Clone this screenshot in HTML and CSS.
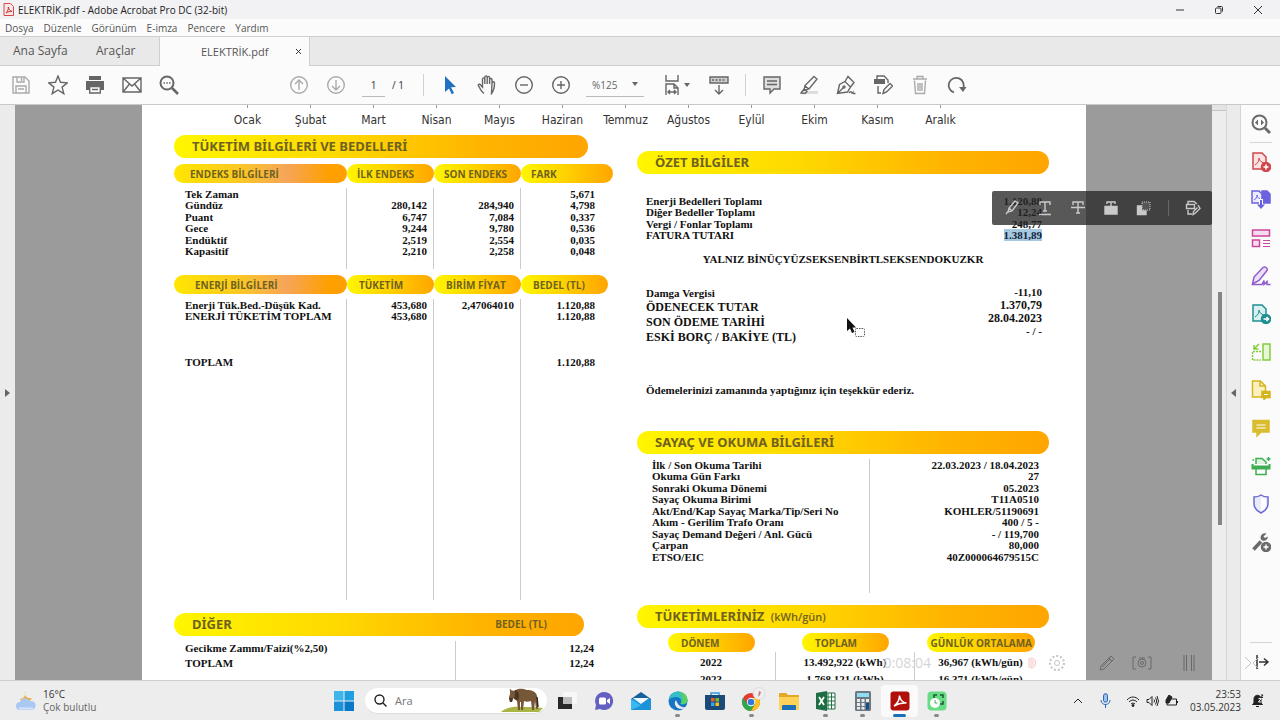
FILE: index.html
```html
<!DOCTYPE html>
<html lang="tr">
<head>
    <meta charset="UTF-8">
    <meta name="viewport" content="width=device-width, initial-scale=1.0">
    <title>ELEKTRİK.pdf - Adobe Acrobat Pro DC (32-bit)</title>
    <link rel="stylesheet" href="styles.css">
</head>
<body>
    <header class="titlebar">
        <svg class="app-icon" width="11" height="13" viewBox="0 0 11 13"><path d="M1 .5h6.500L10.500 3.500v9H1z" fill="#fbe9e9" stroke="#d9484a"/><path d="M3 10c2-2 2.500-4 2.300-6 .4 2 1.700 4 3.700 4.300-2 0-4 .4-6 1.700z" fill="none" stroke="#c92b2e"/></svg>
        <h1>ELEKTRİK.pdf - Adobe Acrobat Pro DC (32-bit)</h1>
        <div class="window-buttons">
            <button aria-label="Küçült"><svg width="10" height="10" viewBox="0 0 10 10"><path d="M1 5h8"/></svg></button>
            <button aria-label="Geri yükle"><svg width="10" height="10" viewBox="0 0 10 10"><rect x="1.500" y="3" width="5.500" height="5.500" rx="1"/><path d="M3.500 1.500h4q1 0 1 1v4"/></svg></button>
            <button aria-label="Kapat"><svg width="10" height="10" viewBox="0 0 10 10"><path d="M1 1l8 8M9 1L1 9"/></svg></button>
        </div>
    </header>

    <nav class="menubar">
        <a href="#">Dosya</a>
        <a href="#">Düzenle</a>
        <a href="#">Görünüm</a>
        <a href="#">E-imza</a>
        <a href="#">Pencere</a>
        <a href="#">Yardım</a>
    </nav>

    <nav class="tabs">
        <a class="tab-home" href="#">Ana Sayfa</a>
        <a class="tab-tools" href="#">Araçlar</a>
        <div class="tab-active">
            <a href="#">ELEKTRİK.pdf</a>
            <button aria-label="Sekmeyi kapat"><svg width="7" height="7" viewBox="0 0 7 7"><path d="M1 1l5 5M6 1L1 6"/></svg></button>
        </div>
    </nav>

    <div class="toolbar">
        <div class="tools">
            <button class="dim" aria-label="Kaydet"><svg viewBox="0 0 20 20"><path d="M2 2h12l4 4v12H2zM6 2v5h7V2M5 18v-7h10v7M10.500 3v3M7 14h6"/></svg></button>
            <button aria-label="Yıldız"><svg viewBox="0 0 20 20"><path d="M10 1l2.500 6.300 6.800.5-5.200 4.300 1.700 6.600L10 15l-5.800 3.700 1.700-6.600L.7 7.800l6.800-.5z"/></svg></button>
            <button aria-label="Yazdır"><svg viewBox="0 0 20 20"><path class="fill" d="M4 1h12v4H4zM1 6h18v9h-3v-4H4v4H1z"/><path d="M4.700 11.500h10.600v6.500H4.700zM7 14.500h6"/></svg></button>
            <button aria-label="E-posta"><svg viewBox="0 0 20 20"><path d="M1 3h18v14H1zM1 3l9 8 9-8M1 17l6.500-8M19 17l-6.500-8"/></svg></button>
            <button aria-label="Bul"><svg viewBox="0 0 20 20"><circle cx="8" cy="8" r="6.500" stroke-width="2"/><path d="M13 13l6 6" stroke-width="2.500"/><path d="M4.500 8h1.500M7.300 8h1.500M10 8h1.500"/></svg></button>
        </div>
        <div class="tools tools-pages">
            <button class="dim" aria-label="Önceki sayfa"><svg viewBox="0 0 20 20"><circle cx="10" cy="10" r="8.300"/><path d="M10 15V5M6 9l4-4 4 4"/></svg></button>
            <button class="dim" aria-label="Sonraki sayfa"><svg viewBox="0 0 20 20"><circle cx="10" cy="10" r="8.300"/><path d="M10 5v10M6 11l4 4 4-4"/></svg></button>
            <input class="page-number" type="text" value="1" aria-label="Sayfa numarası">
            <span class="page-count">/ 1</span>
        </div>
        <div class="tools tools-view">
            <button aria-label="Seç"><svg viewBox="0 0 20 20"><path d="M5 1l11 11-5 .3 3 5.700-2.300 1.200-2.700-5.700L5 17z" fill="#2072c0" stroke="none"/></svg></button>
            <button aria-label="Kaydır"><svg viewBox="0 0 20 20"><path d="M7 18.500C4 16 2.500 13 1.200 10.200c.5-1.500 2-1 2.800.3l1.500 1.700V4c.2-1.500 2-1.500 2.300 0v5M7.800 9V2c.3-1.500 2.200-1.500 2.400 0v7M10.200 9V2.500c.3-1.500 2.200-1.500 2.400 0V9M12.600 9V4.500c.5-1.500 2.300-1.200 2.400.3V10M15 8c.4-1.800 2.500-1.600 2.500.2 0 4-.3 7-3 10.300z"/></svg></button>
            <button aria-label="Uzaklaştır"><svg viewBox="0 0 20 20"><circle cx="10" cy="10" r="8.300"/><path d="M6 10h8"/></svg></button>
            <button aria-label="Yakınlaştır"><svg viewBox="0 0 20 20"><circle cx="10" cy="10" r="8.300"/><path d="M6 10h8M10 6v8"/></svg></button>
            <div class="zoom">
                <select aria-label="Yakınlaştırma"><option>%125</option></select>
                <svg width="6" height="5" viewBox="0 0 6 5"><path class="fill" d="M0 0h6L3 4z"/></svg>
            </div>
            <button aria-label="Genişliğe sığdır"><svg viewBox="0 0 20 20"><path d="M4 0v6h12V0M4 20V9h8l4 4v7M12 9v4h4M6 17h8M8 15l-2 2 2 2M12 15l2 2-2 2"/></svg></button>
            <svg class="caret" width="6" height="5" viewBox="0 0 6 5"><path class="fill" d="M0 0h6L3 4z"/></svg>
            <button class="keyboard" aria-label="Klavye"><svg viewBox="0 0 20 20"><path d="M1 2h18v6H1z" fill="#ccc"/><path d="M3 5h14" stroke-dasharray="2 1.500"/><path d="M10 10v9M6 15l4 4 4-4"/></svg></button>
        </div>
        <div class="tools tools-comment">
            <button aria-label="Not ekle"><svg viewBox="0 0 20 20"><path d="M2 2h16v12h-6l-4 4v-4H2z" fill="#ddd"/><path d="M5 6h10M5 9.500h10"/></svg></button>
            <button aria-label="Vurgula"><svg viewBox="0 0 20 20"><path d="M7 16h12v3H3z" fill="#ddd" stroke="none"/><path d="M15 1.500l3 2.500-8 10-5 1.500 1-5zM6 11l4 3M2 18l3-4 3 2.500-2 2z"/></svg></button>
            <button aria-label="İmzala"><svg viewBox="0 0 20 20"><path d="M1.500 18.500l2-9 5.500-3 5.500 5.500-3 5zM1.500 18.500l6-6M9 6.500l3-5 6 6-3.500 4.500M13 18c3-4 2 2 4-.5 0 1.500 1 1 2.500 1"/><circle cx="8" cy="12" r="1"/></svg></button>
            <button aria-label="Düzenle"><svg viewBox="0 0 20 20"><path class="fill" d="M1 4h11v5H1z"/><path d="M4 5V1h7l4 4v3M5 11v7h3M10 18.500l1-4 6-6 2.500 2.500-6 6z" /></svg></button>
            <button class="dim" aria-label="Sil"><svg viewBox="0 0 20 20"><path d="M3 4h14M7 4V1.500h6V4M4.500 5.500l1 13h9l1-13M8 8v8M10 8v8M12 8v8" /></svg></button>
            <button aria-label="Döndür"><svg viewBox="0 0 20 20"><path d="M7 17.500a7.500 7.500 0 1 1 9-4" stroke-width="1.800"/><path class="fill" d="M12 12h7.500l-3.500 5z"/></svg></button>
        </div>
    </div>

    <main class="workspace">
        <button class="pane-toggle" aria-label="Sol bölme"><svg width="5" height="8" viewBox="0 0 5 8"><path d="M0 0v8l5-4z"/></svg></button>

        <div class="viewer">
            <article class="page">
                <ul class="months">
                    <li>Ocak</li><li>Şubat</li><li>Mart</li><li>Nisan</li><li>Mayıs</li><li>Haziran</li>
                    <li>Temmuz</li><li>Ağustos</li><li>Eylül</li><li>Ekim</li><li>Kasım</li><li>Aralık</li>
                </ul>
                <div class="columns">
                    <section class="left">
                        <h2 class="bar">TÜKETİM BİLGİLERİ VE BEDELLERİ</h2>
                        <table class="usage">
                            <thead>
                                <tr><th><span class="pill pill-warm">ENDEKS BİLGİLERİ</span></th><th><span class="pill">İLK ENDEKS</span></th><th><span class="pill">SON ENDEKS</span></th><th><span class="pill">FARK</span></th></tr>
                            </thead>
                            <tbody>
                                <tr><td>Tek Zaman</td><td></td><td></td><td>5,671</td></tr>
                                <tr><td>Gündüz</td><td>280,142</td><td>284,940</td><td>4,798</td></tr>
                                <tr><td>Puant</td><td>6,747</td><td>7,084</td><td>0,337</td></tr>
                                <tr><td>Gece</td><td>9,244</td><td>9,780</td><td>0,536</td></tr>
                                <tr><td>Endüktif</td><td>2,519</td><td>2,554</td><td>0,035</td></tr>
                                <tr><td>Kapasitif</td><td>2,210</td><td>2,258</td><td>0,048</td></tr>
                                <tr class="tail"><td></td><td></td><td></td><td></td></tr>
                            </tbody>
                        </table>
                        <table class="usage energy">
                            <thead>
                                <tr><th><span class="pill pill-warm">ENERJİ BİLGİLERİ</span></th><th><span class="pill">TÜKETİM</span></th><th><span class="pill">BİRİM FİYAT</span></th><th><span class="pill">BEDEL (TL)</span></th></tr>
                            </thead>
                            <tbody>
                                <tr><td>Enerji Tük.Bed.-Düşük Kad.</td><td>453,680</td><td>2,47064010</td><td>1.120,88</td></tr>
                                <tr><td>ENERJİ TÜKETİM TOPLAM</td><td>453,680</td><td></td><td>1.120,88</td></tr>
                                <tr class="space"><td></td><td></td><td></td><td></td></tr>
                                <tr><td>TOPLAM</td><td></td><td></td><td>1.120,88</td></tr>
                                <tr class="tail"><td></td><td></td><td></td><td></td></tr>
                            </tbody>
                        </table>
                        <h2 class="bar bar-other">DİĞER <small>BEDEL (TL)</small></h2>
                        <table class="other">
                            <tr><td>Gecikme Zammı/Faizi(%2,50)</td><td>12,24</td></tr>
                            <tr><td>TOPLAM</td><td>12,24</td></tr>
                            <tr><td></td><td></td></tr>
                        </table>
                    </section>

                    <section class="right">
                        <h2 class="bar">ÖZET BİLGİLER</h2>
                        <table class="summary">
                            <tr><td>Enerji Bedelleri Toplamı</td><td>1.120,88</td></tr>
                            <tr><td>Diğer Bedeller Toplamı</td><td>12,24</td></tr>
                            <tr><td>Vergi / Fonlar Toplamı</td><td>248,77</td></tr>
                            <tr><td>FATURA TUTARI</td><td><mark>1.381,89</mark></td></tr>
                        </table>
                        <p class="in-words">YALNIZ BİNÜÇYÜZSEKSENBİRTLSEKSENDOKUZKR</p>
                        <div class="payment">
                            <div class="payment-labels">
                                <p>Damga Vergisi</p>
                                <p class="big">ÖDENECEK TUTAR</p>
                                <p class="big">SON ÖDEME TARİHİ</p>
                                <p class="big">ESKİ BORÇ / BAKİYE (TL)</p>
                            </div>
                            <div class="payment-values">
                                <p>-11,10</p>
                                <p class="strong">1.370,79</p>
                                <p class="strong">28.04.2023</p>
                                <p>- / -</p>
                            </div>
                        </div>
                        <p class="thanks">Ödemelerinizi zamanında yaptığınız için teşekkür ederiz.</p>

                        <h2 class="bar">SAYAÇ VE OKUMA BİLGİLERİ</h2>
                        <table class="meter">
                            <tr><td>İlk / Son Okuma Tarihi</td><td>22.03.2023 / 18.04.2023</td></tr>
                            <tr><td>Okuma Gün Farkı</td><td>27</td></tr>
                            <tr><td>Sonraki Okuma Dönemi</td><td>05.2023</td></tr>
                            <tr><td>Sayaç Okuma Birimi</td><td>T11A0510</td></tr>
                            <tr><td>Akt/End/Kap Sayaç Marka/Tip/Seri No</td><td>KOHLER/51190691</td></tr>
                            <tr><td>Akım - Gerilim Trafo Oranı</td><td>400 / 5 -</td></tr>
                            <tr><td>Sayaç Demand Değeri / Anl. Gücü</td><td>- / 119,700</td></tr>
                            <tr><td>Çarpan</td><td>80,000</td></tr>
                            <tr><td>ETSO/EIC</td><td>40Z000064679515C</td></tr>
                            <tr class="tail"><td></td><td></td></tr>
                        </table>

                        <h2 class="bar">TÜKETİMLERİNİZ <small class="unit">(kWh/gün)</small></h2>
                        <table class="history">
                            <thead>
                                <tr><th><span class="pill">DÖNEM</span></th><th><span class="pill">TOPLAM</span></th><th><span class="pill pill-wide">GÜNLÜK ORTALAMA</span></th></tr>
                            </thead>
                            <tbody>
                                <tr><td>2022</td><td>13.492,922 (kWh)</td><td>36,967 (kWh/gün)</td></tr>
                                <tr><td>2023</td><td>1.768,121 (kWh)</td><td>16,371 (kWh/gün)</td></tr>
                            </tbody>
                        </table>
                    </section>
                </div>

                <!-- Fare imleci -->
                <svg class="cursor" width="22" height="24" viewBox="0 0 22 24"><path d="M1 1v13l3-2.500 2 4.500 2.500-1-2-4.500H10z" fill="#111"/><rect x="9.500" y="11.500" width="9" height="8" rx="1" fill="none" stroke="#555" stroke-dasharray="1.500 1"/></svg>
            </article>

            <!-- Metin seçimi araç çubuğu -->
            <div class="selection-tools">
                <button aria-label="Metni vurgula"><svg viewBox="0 0 16 16"><path d="M11 1l3 2-6 8-4 1 1-4zM5 8l3 3M2 14l2-2.500"/></svg></button>
                <button aria-label="Altını çiz"><svg viewBox="0 0 16 16"><path d="M3 5V2h10v3M8 2v9M6 11h4M2 14.500h12"/></svg></button>
                <button aria-label="Üstünü çiz"><svg viewBox="0 0 16 16"><path d="M3 5V2h10v3M8 2v11M6 13h4M1 7.500h14"/></svg></button>
                <button aria-label="Metni değiştir"><svg viewBox="0 0 16 16"><path d="M2 6.500h12v7.500H2z" fill="#c9c9c9"/><path d="M4 4V2h8v2M8 2v4"/></svg></button>
                <button aria-label="Kopyala"><svg viewBox="0 0 16 16"><path d="M1.500 6h4v5H10v3.500H1.500z" fill="#c9c9c9"/><path d="M6 2h8v8H6z" stroke-dasharray="1 1" stroke-width="1" fill="#555"/></svg></button>
                <button class="edit" aria-label="Metni düzenle"><svg viewBox="0 0 16 16"><path d="M3 4V1.500h6L12 4M1.500 4.500h8v4h-8zM3 10v4h4M13 5l2 3.500-5 5-2 1 .5-3 4-4"/></svg></button>
            </div>
        </div>

        <div class="scrollbar"><div class="scroll-corner"></div><div class="thumb"></div></div>
        <button class="pane-toggle pane-right" aria-label="Sağ bölme"><svg width="5" height="8" viewBox="0 0 5 8"><path d="M5 0v8L0 4z"/></svg></button>

        <aside class="tool-pane">
            <button class="first" aria-label="Araç ara"><svg viewBox="0 0 20 20" stroke="#6b6b6b"><circle cx="8.500" cy="8.500" r="7" stroke-width="2"/><path d="M14 14l5 5" stroke-width="3"/><path d="M7 5.500v6L4 8.500zM10 5.500v6l3-3z" fill="#6b6b6b" stroke="none"/></svg></button>
            <button aria-label="PDF Oluştur"><svg viewBox="0 0 20 20" stroke="#d0474c"><path d="M2 1h9l4 4v12H2z" fill="#fbe3e3"/><path d="M4 13c3-2 4-4 4-7 .5 3 2 4 5 5" stroke-width="1"/><circle cx="15" cy="15" r="4.500" fill="#d0474c"/><path d="M12.500 15h5M15 12.500v5" stroke="#fff"/></svg></button>
            <button aria-label="Dosyaları Birleştir"><svg viewBox="0 0 20 20" stroke="#6a63dd"><path d="M11 1h5l3 3v9h-8z" fill="#6a63dd"/><path d="M1 1h7l3 3v9H1z" fill="#eceafd"/><path d="M3 10c2-1 3-3 3-5 .5 2 1 3 3 4" stroke-width="1"/><path d="M10 9v9" stroke="#fff" stroke-width="4"/><path d="M10 10v6" stroke-width="2"/><path d="M6 14.500h8L10 19z" fill="#6a63dd" stroke="none"/></svg></button>
            <button aria-label="Sayfaları Düzenle"><svg viewBox="0 0 20 20" stroke="#c9489b"><path d="M1.500 2h17v6h-17zM1.500 12h7v6.500h-7z" fill="#f8dcee"/><path d="M12 12.500h7M12 15.500h7M12 18.500h7" stroke-width="1"/></svg></button>
            <button aria-label="Doldur ve İmzala"><svg viewBox="0 0 20 20" stroke="#8f5ccb"><path d="M1.500 18l1.500-7L12 1.500c2-1.500 5 .5 4 3L8 14.500z" fill="#ecdff8"/><path d="M1 18.500h10l2-4v4l3-3v3h3.500"/></svg></button>
            <button aria-label="PDF Dışa Aktar"><svg viewBox="0 0 20 20" stroke="#1f8f92"><path d="M2 1h9l4 4v12H2z" fill="#d9f0f0"/><path d="M4 13c3-2 4-4 4-7 .5 3 2 4 5 5" stroke-width="1"/><circle cx="15" cy="15" r="4.500" fill="#1f8f92"/><path d="M12.500 15h5M15.500 13l2 2-2 2" stroke="#fff"/></svg></button>
            <button aria-label="Sayfa Düzeni"><svg viewBox="0 0 20 20" stroke="#85cc3f"><path d="M12 2h7v16h-7z" fill="#e6f7d4"/><path d="M10 9.500H1.500V18H10" stroke-dasharray="2 1"/><path d="M8 2L3 7M3 3v4h4.500"/></svg></button>
            <button aria-label="Yorum Gönder"><svg viewBox="0 0 20 20" stroke="#d4b51c"><path d="M1.500 1h8l5 5v11h-13z" fill="#faf0c0"/><path d="M9 1v5h5"/><path d="M11 11.500h8v6h-4l-2 2v-2h-2z" fill="#d4b51c"/><path d="M13 14.500h4" stroke="#fff" stroke-width="1"/></svg></button>
            <button aria-label="Yorum"><svg viewBox="0 0 20 20" stroke="#d9bd2e"><path d="M2 2.500h16v11.500h-8l-4 4v-4H2z" fill="#d9bd2e"/><path d="M5.500 7h9M5.500 10h9" stroke="#fff" stroke-width="1"/></svg></button>
            <button aria-label="Tara ve OCR"><svg viewBox="0 0 20 20" stroke="#3fae52"><path d="M5 8V2.500h6L15 6v2" fill="#dff5e2"/><path d="M1.500 8v4.500h17V8M1 10.500h18" stroke-width="2"/><path d="M5 13v5.500h10V13M17.500 1v4M15.500 3h4M1.500 4h1.500"/></svg></button>
            <button aria-label="Koru"><svg viewBox="0 0 20 20" stroke="#6a6bd0"><path d="M10 1c2 1.500 4 2 7 2v7c0 4-3 7-7 9-4-2-7-5-7-9V3c3 0 5-.5 7-2z" fill="#e9ebfb"/><path d="M10 3v14c3-1.500 5-4 5-7V5c-2 0-4-1-5-2z" fill="#fff" stroke="none"/></svg></button>
            <button aria-label="Diğer Araçlar"><svg viewBox="0 0 20 20" stroke="#6b6b6b"><path d="M2.500 17.500L10 9.500" stroke-width="3.500"/><path d="M15.500 1.500c-4-1.500-7 2.500-5.500 6 2 2.500 6.500 1.500 7-3l-3 1.500-1.500-1.500z" fill="#6b6b6b" stroke="none"/><circle cx="15" cy="15" r="4.500" fill="#6b6b6b"/><path d="M12.500 15h5M15 12.500v5" stroke="#fff"/></svg></button>
            <button class="collapse" aria-label="Bölmeyi daralt"><svg viewBox="0 0 20 20" stroke="#333"><path d="M6 3v14M8 10h9M13 6.500l4 3.500-4 3.500"/></svg></button>
        </aside>

        <!-- Ekran kaydedici kontrolleri -->
        <div class="recorder">
            <span class="recorder-time">0:08:04</span>
            <svg class="recorder-record" width="10" height="14" viewBox="0 0 10 14"><path d="M2 2v10M4 2c6 0 6 10 0 10zM6 4v6"/></svg>
            <svg class="recorder-gear" width="18" height="18" viewBox="0 0 18 18"><circle cx="9" cy="9" r="7" stroke-width="2" stroke-dasharray="2 2"/><circle cx="9" cy="9" r="2.500"/></svg>
            <svg class="recorder-dark" width="18" height="18" viewBox="0 0 18 18"><path d="M2 16l1-4L13 2l3 3L6 15zM11 4l3 3M4 13L12 5"/></svg>
            <svg class="recorder-dark" width="20" height="18" viewBox="0 0 20 18"><path d="M4 3H1v12h3M16 3h3v12h-3M7 4h6"/><circle cx="10" cy="9" r="4"/><circle cx="10" cy="9" r="1.500"/></svg>
            <svg class="recorder-dark recorder-pause" width="14" height="18" viewBox="0 0 14 18"><path d="M2 1v16M4.500 1v16M9.500 1v16M12 1v16"/></svg>
            <svg class="recorder-close" width="16" height="16" viewBox="0 0 16 16"><path d="M1 2l6 6-6 6M15 2L9 8l6 6"/></svg>
        </div>
    </main>

    <footer class="taskbar">
        <a class="weather" href="#">
            <svg width="22" height="22" viewBox="0 0 22 22"><path d="M10 1c-1 5 2 8 7 7-2 5-10 6-12 1 4 0 6-4 5-8z" fill="#f2a93b"/><path d="M5 20a4 4 0 0 1 0-8 5.500 5.500 0 0 1 10-1 4.600 4.600 0 0 1 2 9z" fill="#a9c8f2"/><path d="M4 18.500h14" stroke="#d5e4fa" stroke-width="2"/></svg>
            <span>16°C<br><span class="soft">Çok bulutlu</span></span>
        </a>
        <div class="apps">
            <button class="start" aria-label="Başlat"><svg width="20" height="20" viewBox="0 0 20 20"><path d="M0 0h9.500v9.500H0z" fill="#3bb5ea"/><path d="M10.500 0H20v9.500h-9.500z" fill="#1f9fe0"/><path d="M0 10.500h9.500V20H0z" fill="#1b93d8"/><path d="M10.500 10.500H20V20h-9.500z" fill="#0878c8"/></svg></button>
            <label class="search">
                <svg width="13" height="13" viewBox="0 0 13 13"><circle cx="5.500" cy="5.500" r="4.500"/><path d="M9 9l3.500 3.500"/></svg>
                <input type="text" placeholder="Ara" aria-label="Ara">
                <svg class="gnu" width="42" height="24" viewBox="0 0 42 24"><path d="M0 24c5-5 14-6 22-5 8 0 14 0 20 1l-4 4z" fill="#a9b545"/><path d="M9 3c-1-2 1-3 1-1 1 1 3 1 5 0 4-2 7-1 11 0 4 0 9 1 10 6l1 13h-2l-1-8-1 9h-2l-1-9c-3 1-5 1-7 0l-1 9h-2v-8h-1v8h-2l-1-9-4-3-1 4-2 0-1-5 1-3z" fill="#765738"/><path d="M14 2c4 1 5 6 3 10l-4-1c1-3 1-6 1-9zM8 10l1 4h2l1-4z" fill="#4a3626"/><path d="M36 9l1 10" stroke="#2c211a"/></svg>
            </label>
            <button aria-label="Görev görünümü"><svg viewBox="0 0 20 20"><path d="M1 6h14v12H1z" fill="#282828"/><path d="M6 1h14v12H6z" fill="#f7f7f7"/><path d="M6 6h9v7H6z" fill="#bdbdbd"/></svg></button>
            <button aria-label="Sohbet"><svg viewBox="0 0 20 20"><path d="M10 1a9 9 0 1 1-4 17l-5 1 1-5A9 9 0 0 1 10 1z" fill="#6460c2"/><rect x="5" y="6.500" width="7" height="7" rx="1.500" fill="#fff"/><path d="M13 9l3-2v6l-3-2z" fill="#fff"/></svg></button>
            <button aria-label="Posta"><svg viewBox="0 0 20 20"><path d="M0 8l10-7 10 7z" fill="#14619e"/><path d="M0 8h20v11H0z" fill="#1c93d9"/><path d="M2 7h16l-8 6z" fill="#f3faff"/><path d="M0 8l10 6.500L0 19z" fill="#3ab8f0"/></svg></button>
            <button class="running" aria-label="Edge"><svg viewBox="0 0 20 20"><circle cx="10" cy="10" r="9.500" fill="#1676c5"/><path d="M.6 9A9.500 9.500 0 0 1 19.500 9c.3 3-3 5-7 4 2-3 0-7-4-7-4 0-6 1-7.900 3z" fill="#35bfc5"/><path d="M12 .8c5 1 8 5 7.500 9-1 3-4 4-7 3 3-3 2-8-.5-12z" fill="#5bd060"/><path d="M8 9c-3 4 0 9 6 9 2 0 3-1 4-2-4 1-8-1-10-7z" fill="#ececec"/></svg></button>
            <button aria-label="Microsoft Store"><svg viewBox="0 0 20 20"><path d="M6 5V2h8v3" fill="none" stroke="#2e9be0" stroke-width="1.500"/><path d="M0 4h20v13q0 2-2 2H2q-2 0-2-2z" fill="#1b4a78"/><path d="M6 7h3.500v3.500H6z" fill="#ee5b35"/><path d="M10.500 7H14v3.500h-3.500z" fill="#7fba2c"/><path d="M6 11.500h3.500V15H6z" fill="#32a6ea"/><path d="M10.500 11.500H14V15h-3.500z" fill="#fbbc1e"/></svg></button>
            <button class="running" aria-label="Chrome"><svg viewBox="0 0 20 20" overflow="visible"><circle cx="9" cy="11" r="9" fill="#e33b2e"/><path d="M1.200 6.500A9 9 0 0 0 9 20l4-7-8 0z" fill="#2da94f"/><path d="M9 20a9 9 0 0 0 8-13H9l4 6z" fill="#fcc31e"/><circle cx="9" cy="11" r="4.200" fill="#fff"/><circle cx="9" cy="11" r="3.300" fill="#2f78e0"/><circle cx="17" cy="2.500" r="6" fill="#f0eeee" stroke="#ccc" stroke-width=".5"/><path d="M16 6l1-6 2 1-1 3z" fill="#b98080"/></svg></button>
            <button aria-label="Dosya Gezgini"><svg viewBox="0 0 20 20"><path d="M0 2h7l2 2h11v14H0z" fill="#e5a823"/><path d="M0 6h20v13H0z" fill="#ffd25a"/><path d="M3 19v-4q0-1 1-1h12q1 0 1 1v4z" fill="#1d6fb8"/></svg></button>
            <button class="running" aria-label="Excel"><svg viewBox="0 0 20 20"><path d="M6 2h13v16H6z" fill="#fff" stroke="#217346"/><path d="M12 2v16M15.500 2v16M10 6h9M10 10h9M10 14h9" stroke="#217346"/><path d="M0 2l11-2v20L0 18z" fill="#1d6e42"/><path d="M3 6l5 8M8 6l-5 8" stroke="#fff" stroke-width="1.800"/></svg></button>
            <button class="running" aria-label="Hesap Makinesi"><svg viewBox="0 0 20 20"><rect x="2" width="16" height="20" rx="1.500" fill="#6f7881"/><path d="M4 2h12v4H4z" fill="#8fdcf5"/><path d="M4 8h3v3H4zM8.500 8h3v3h-3zM13 8h3v3h-3zM4 12h3v3H4zM8.500 12h3v3h-3zM4 16h3v2.500H4zM8.500 16h3v2.500h-3z" fill="#e8ecef"/><path d="M13 12h3v6.500h-3z" fill="#14508a"/></svg></button>
            <button class="running current" aria-label="Acrobat"><svg viewBox="0 0 20 20"><rect x=".5" y=".5" width="19" height="19" rx="3" fill="#b1100a"/><path d="M4 15c4-3 5.500-6 5.500-10.500C10 9 12 11.500 16.500 12c-4.500-.5-8.500.5-12.500 3z" fill="none" stroke="#fff" stroke-width="1.500"/></svg></button>
            <button class="running" aria-label="Saat"><svg viewBox="0 0 20 20"><rect x=".5" y=".5" width="19" height="19" rx="4" fill="#66dc84"/><path d="M7 7V4h3M13 4h3v3M16 10v3h-3" fill="none" stroke="#1d5a32" stroke-width="1.500"/><circle cx="8" cy="12" r="5" fill="#fff"/><path d="M8 9v3h2.500" fill="none" stroke="#4aa868"/></svg></button>
        </div>
        <div class="tray">
            <button aria-label="Gizli simgeler"><svg width="10" height="6" viewBox="0 0 10 6"><path d="M1 5l4-4 4 4"/></svg></button>
            <button class="mic" aria-label="Mikrofon"><svg width="11" height="15" viewBox="0 0 11 15"><rect x="3.500" y=".7" width="4" height="8.500" rx="2" fill="#9cc3ee" stroke="#2b67b5"/><path d="M1 7c0 6 9 6 9 0M5.500 11.500V15" stroke="#2b67b5"/></svg></button>
            <button class="net" aria-label="Ağ ve ses">
                <svg width="14" height="12" viewBox="0 0 14 12"><path d="M1 5c3.500-4 8.500-4 12 0M3 7c2.500-2.600 5.500-2.600 8 0M5 9c1.300-1.200 2.700-1.200 4 0"/><circle cx="7" cy="10.500" r="1" fill="#222"/></svg>
                <svg width="13" height="12" viewBox="0 0 13 12"><path d="M1 4.500v3h2l3 3v-9l-3 3zM8 4.500q1 1.500 0 3M9.500 2.500q2.500 3.500 0 7M11 1q3 5 0 10"/></svg>
                <svg width="14" height="12" viewBox="0 0 14 12"><path d="M3 4h8.500v6H2V7M12.500 6v2"/><path d="M1 5l3-5 3 2-3 6H1z" fill="#222"/></svg>
            </button>
            <div class="clock">23:53<br>03.05.2023</div>
            <button aria-label="Bildirimler"><svg width="13" height="14" viewBox="0 0 13 14"><path d="M3 9V5c0-5 7-5 7 0v4l1.500 1.500h-10zM5 12.500h3" fill="#222"/><path d="M7.500 4.500H10L7.500 8H10" stroke="#fff"/><path d="M10 1h2l-2 2.500h2"/></svg></button>
        </div>
    </footer>
</body>
</html>
```
FILE: styles.css
```css
* {
    margin: 0;
    padding: 0;
    box-sizing: border-box;
}

body {
    display: flex;
    flex-direction: column;
    height: 100vh;
    overflow: hidden;
    font-family: "Open Sans", "Noto Sans", sans-serif;
    font-size: 10px;
    color: #333;
    background-color: #fbfbfb;
}

button, input, select {
    border: none;
    background: none;
    font: inherit;
    color: inherit;
}

button {
    display: flex;
    align-items: center;
    justify-content: center;
}

a {
    color: inherit;
    text-decoration: none;
}

svg {
    flex: none;
}

/* Başlık çubuğu */
.titlebar {
    display: flex;
    align-items: center;
    height: 19px;
    padding: 0 3px;
    gap: 4px;
    background-color: #f2f2f4;
}

.titlebar h1 {
    flex: 1;
    font-size: 10px;
    font-weight: normal;
    color: #222;
}

.window-buttons {
    display: flex;
}

.window-buttons button {
    width: 39px;
    height: 19px;
}

.window-buttons svg,
.tab-active svg {
    fill: none;
    stroke: #333;
}

.menubar {
    display: flex;
    align-items: center;
    gap: 10px;
    height: 17px;
    padding-left: 5px;
    color: #555;
}

/* Sekmeler */
.tabs {
    display: flex;
    height: 30px;
    font-size: 12px;
    line-height: 28px;
    color: #555;
    background-color: #e9e9e9;
    border-top: 1px solid #cfcfcf;
    border-bottom: 1px solid #cfcfcf;
}

.tab-home {
    width: 84px;
    padding-left: 13px;
}

.tab-tools {
    width: 75px;
    padding-left: 12px;
}

.tab-active {
    display: flex;
    align-items: center;
    justify-content: space-between;
    width: 151px;
    height: 29px;
    padding: 0 7px 0 41px;
    font-size: 11px;
    background-color: #fbfbfb;
    border-left: 1px solid #cfcfcf;
    border-right: 1px solid #cfcfcf;
}

/* Araç çubuğu */
.toolbar {
    display: flex;
    height: 39px;
    padding-left: 2px;
    border-bottom: 1px solid #c9c9c9;
}

.tools {
    display: flex;
    align-items: center;
    fill: none;
    stroke: #666;
    stroke-width: 1.4;
}

.tools button {
    width: 37px;
    height: 38px;
}

.tools button svg {
    width: 20px;
    height: 20px;
}

.tools .dim {
    stroke: #aaa;
}

.tools .fill {
    fill: #666;
    stroke: none;
}

.tools-pages {
    margin-left: 93px;
}

.page-number {
    width: 23px;
    height: 24px;
    margin-left: 8px;
    text-align: center;
    border-bottom: 1px solid #bbb;
}

.page-count {
    width: 15px;
    margin-left: 7px;
}

.tools-view {
    margin-left: 16px;
    padding-left: 8px;
    background: linear-gradient(#d0d0d0, #d0d0d0) 0 8px / 1px 22px no-repeat;
}

.zoom {
    display: flex;
    align-items: center;
    height: 24px;
    margin-left: 7px;
    padding: 0 6px;
    border-bottom: 1px solid #bbb;
}

.zoom select {
    width: 40px;
    appearance: none;
    color: #666;
}

.tools-view .zoom + button {
    margin-left: 10px;
    width: 35px;
}

.caret {
    margin-left: -5px;
}

.tools-view .keyboard {
    margin-left: 10px;
}

.tools-comment {
    margin-left: 8px;
    padding-left: 8px;
    background: linear-gradient(#d0d0d0, #d0d0d0) 0 8px / 1px 22px no-repeat;
}

/* Çalışma alanı */
.workspace {
    position: relative;
    display: flex;
    flex: 1;
    min-height: 0;
}

.pane-toggle {
    width: 15px;
    background-color: #ebebeb;
    fill: #666;
}

.pane-right {
    width: 14px;
    border-right: 1px solid #d5d5d5;
}

.viewer {
    position: relative;
    flex: 1;
    overflow: hidden;
    padding: 0 126px 0 127px;
    background-color: #9b9b9b;
}

/* Fatura sayfası */
.page {
    position: relative;
    height: 100%;
    overflow: hidden;
    padding-left: 32px;
    font-family: "Liberation Serif", serif;
    font-size: 11px;
    font-weight: bold;
    line-height: 12px;
    color: #111;
    background-color: #fff;
}

.months {
    display: grid;
    grid-template-columns: repeat(12, 63px);
    height: 30px;
    padding-left: 42px;
    list-style: none;
    text-align: center;
    font-family: "DejaVu Sans Condensed", "DejaVu Sans", sans-serif;
    font-size: 12px;
    font-weight: normal;
    line-height: 30px;
    color: #333;
    background: repeating-linear-gradient(90deg, transparent 0 31px, #999 31px 32px, transparent 32px 63px) 42px 0 / 756px 3px no-repeat;
}

.columns {
    display: flex;
    gap: 24px;
}

.left {
    width: 439px;
}

.right {
    width: 412px;
    padding-top: 16px;
}

.bar {
    height: 23px;
    padding-left: 18px;
    border-radius: 12px;
    font-family: "Noto Sans", "Open Sans", sans-serif;
    font-size: 13px;
    line-height: 23px;
    color: #6f6220;
    background: linear-gradient(90deg, #fff600, #ffd800 40%, #ffb400 75%, #ffa500);
}

.left .bar {
    width: 414px;
}

.bar small {
    font-family: "Open Sans", "Noto Sans", sans-serif;
    font-size: 10px;
}

.bar .unit {
    margin-left: 3px;
    font-size: 11px;
    font-weight: 600;
}

table {
    border-collapse: separate;
    border-spacing: 0;
    table-layout: fixed;
}

td {
    height: 12px;
}

tr:nth-child(even) td {
    height: 11px;
    line-height: 11px;
}

th {
    text-align: left;
}

.pill {
    display: block;
    height: 19px;
    border-radius: 10px;
    font-family: "Open Sans", "Noto Sans", sans-serif;
    font-size: 10px;
    line-height: 20px;
    color: #6f6220;
    white-space: nowrap;
    background: linear-gradient(90deg, #fff600, #ffd000 50%, #ffa500);
}

.pill-warm {
    background: linear-gradient(90deg, #ffe600, #fccb20 35%, #f6a558 65%, #ffa000 90%);
}

.usage {
    width: 439px;
    margin-top: 6px;
}

.usage th {
    width: 87px;
    padding-bottom: 5px;
}

.usage th:first-child {
    width: 173px;
}

.usage th:last-child {
    width: 92px;
}

.usage .pill {
    padding-left: 10px;
}

.usage .pill-warm {
    padding-left: 16px;
}

.usage td {
    padding-right: 6px;
    text-align: right;
    border-right: 1px solid #ccc;
}

.usage td:first-child {
    padding-left: 11px;
    text-align: left;
}

.usage td:last-child {
    padding-right: 18px;
    border-right: none;
}

.usage .tail td {
    height: 12px;
}

.energy th:last-child .pill {
    width: 87px;
}

.energy .pill {
    padding-left: 12px;
}

.energy .pill-warm {
    padding-left: 21px;
}

.energy .space td {
    height: 35px;
}

.energy .tail td {
    height: 232px;
}

.left .bar-other {
    display: flex;
    justify-content: space-between;
    width: 410px;
    margin-top: 13px;
    padding-right: 37px;
}

.other {
    width: 420px;
    margin-top: 5px;
}

.other tr td {
    height: 15px;
    line-height: 15px;
    text-align: right;
}

.other tr td:first-child {
    width: 282px;
    padding-left: 11px;
    text-align: left;
    border-right: 1px solid #ccc;
}

.summary {
    width: 396px;
    margin: 21px 0 0 9px;
}

.summary td:last-child {
    text-align: right;
}

mark {
    color: #10233a;
    background-color: #a6c8e0;
}

.in-words {
    margin-top: 12px;
    text-align: center;
}

.payment {
    display: flex;
    justify-content: space-between;
    width: 396px;
    margin: 21px 0 0 9px;
}

.payment-labels .big {
    font-size: 12px;
    line-height: 15px;
}

.payment-labels p:first-child {
    line-height: 14px;
}

.payment-values {
    text-align: right;
    line-height: 13px;
}

.payment-values .strong {
    font-size: 12px;
}

.thanks {
    margin: 39px 0 35px 9px;
}

.meter {
    width: 387px;
    margin: 5px 0 12px 15px;
}

.meter td {
    text-align: right;
    white-space: nowrap;
}

.meter td:first-child {
    width: 218px;
    text-align: left;
    border-right: 1px solid #ccc;
}

.meter .tail td {
    height: 30px;
}

.history {
    width: 399px;
    margin: 5px 0 0 10px;
    text-align: center;
}

.history th:first-child {
    width: 129px;
}

.history th:nth-child(2) {
    width: 139px;
}

.history .pill {
    width: 87px;
    margin: 0 auto;
    padding-left: 13px;
}

.history .pill-wide {
    width: 108px;
    padding-left: 4px;
}

.history tr td {
    height: 17px;
    padding-top: 3px;
    line-height: 14px;
    border-right: 1px solid #ccc;
}

.history tr td:last-child {
    border-right: none;
}

.cursor {
    position: absolute;
    left: 704px;
    top: 212px;
}

/* Seçim araç çubuğu */
.selection-tools {
    position: absolute;
    top: 86px;
    right: 0;
    display: flex;
    align-items: center;
    width: 220px;
    height: 34px;
    padding-left: 3px;
    border-radius: 2px;
    background-color: rgba(38, 38, 38, .77);
    fill: none;
    stroke: #c9c9c9;
    stroke-width: 1.4;
}

.selection-tools button {
    width: 33px;
    height: 34px;
}

.selection-tools svg {
    width: 16px;
    height: 16px;
}

.selection-tools .edit {
    margin-left: 8px;
    padding-left: 6px;
    border-left: 1px solid #666;
    height: 16px;
    width: 42px;
}

.scrollbar {
    width: 15px;
    background-color: #ededed;
    border-right: 1px solid #d8d8d8;
}

.scroll-corner {
    height: 6px;
    background-color: #e4e4e4;
    border-bottom: 1px solid #c4c4c4;
}

.thumb {
    width: 4px;
    height: 233px;
    margin: 181px 0 0 6px;
    background-color: #858585;
}

/* Sağ araç bölmesi */
.tool-pane {
    display: flex;
    flex-direction: column;
    align-items: center;
    width: 39px;
    background-color: #fbfbfb;
}

.tool-pane button {
    width: 38px;
    height: 38px;
    fill: none;
    stroke-width: 1.5;
}

.tool-pane svg {
    width: 20px;
    height: 20px;
}

.tool-pane .first {
    width: 22px;
    border-bottom: 1px solid #d5d5d5;
}

.tool-pane .collapse {
    width: 22px;
    margin-top: auto;
    border-top: 1px solid #d5d5d5;
}

/* Kaydedici */
.recorder {
    position: absolute;
    right: 20px;
    bottom: 0;
    display: flex;
    align-items: center;
    height: 34px;
    fill: none;
    stroke: #c4c4c4;
}

.recorder-time {
    font-size: 14px;
    line-height: 34px;
    color: #d5d5d5;
    margin-right: 96px;
}

.recorder-record {
    margin-right: 11px;
    stroke: #f3c4c4;
}

.recorder-gear {
    margin-right: 16px;
}

.recorder-dark {
    margin-left: 16px;
    stroke: #696969;
}

.recorder-pause {
    margin: 0 48px 0 30px;
}

/* Görev çubuğu */
.taskbar {
    display: grid;
    grid-template-columns: 1fr auto 1fr;
    align-items: center;
    height: 40px;
    color: #333;
    background-color: #ededed;
    border-top: 1px solid #cfcfcf;
}

.weather {
    display: flex;
    align-items: center;
    gap: 6px;
    padding-left: 15px;
    line-height: 13px;
}

.soft {
    color: #666;
}

.apps {
    display: flex;
    align-items: center;
}

.apps button {
    position: relative;
    width: 37px;
    height: 32px;
}

.apps button svg {
    width: 20px;
    height: 20px;
}

.search {
    display: flex;
    align-items: center;
    width: 182px;
    height: 26px;
    margin: 0 1px 0 3px;
    padding: 0 4px 0 9px;
    border-radius: 13px;
    fill: none;
    stroke: #222;
    stroke-width: 1.4;
    background-color: #fff;
    border-bottom: 1px solid #ddd;
}

.search input {
    flex: 1;
    min-width: 0;
    padding-left: 8px;
    font-size: 11px;
}

.search .gnu {
    stroke: none;
}

.running::after {
    content: "";
    position: absolute;
    bottom: 0;
    width: 5px;
    height: 3px;
    border-radius: 2px;
    background-color: #888;
}

.current {
    border-radius: 4px;
    background-color: #fafafa;
}

.current::after {
    width: 13px;
    background-color: #1a6fb8;
}

.tray {
    display: flex;
    align-items: center;
    justify-content: flex-end;
    padding-right: 16px;
    fill: none;
    stroke: #222;
}

.tray .mic {
    margin: 0 15px 0 17px;
}

.net {
    gap: 6px;
}

.clock {
    width: 62px;
    margin-right: 10px;
    font-size: 10px;
    line-height: 13px;
    text-align: right;
    color: #333;
}
```
